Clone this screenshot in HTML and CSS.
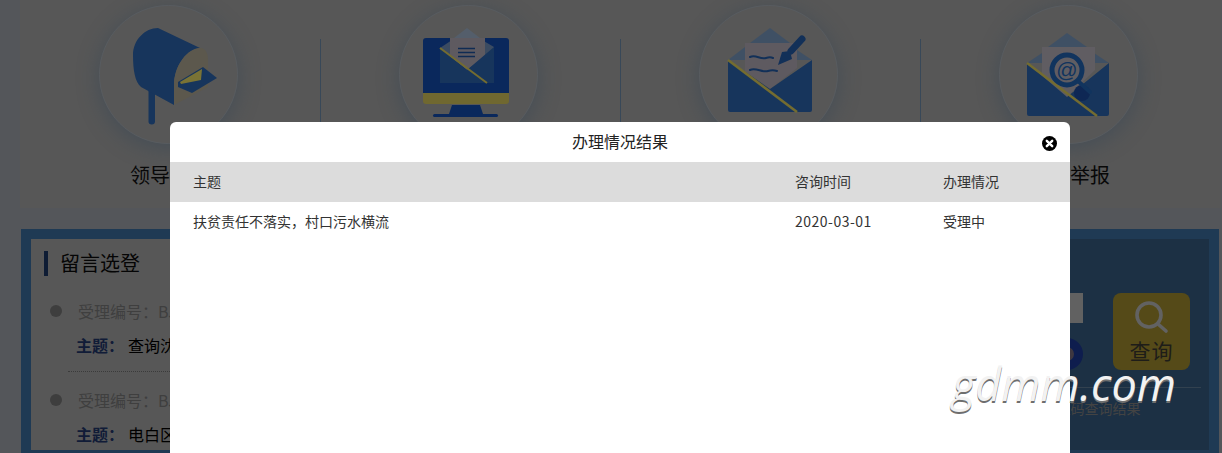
FILE: index.html
```html
<!DOCTYPE html>
<html lang="zh-CN">
<head>
<meta charset="utf-8">
<title>办理情况结果</title>
<link rel="stylesheet" href="styles.css">
</head>
<body>
<main class="page">
  <nav class="nav">
    <a class="nav-item">
      <span class="disc">
        <svg class="ico" width="139" height="139" viewBox="99 5 139 139">
          <rect x="148.5" y="88" width="6.5" height="36.5" rx="3.2" fill="#2e6ab8"/>
          <path d="M133 55C133 40 145 28 158 28L200 48C185 50 174 68 174 85L174 105L141 87C135 82 133 70 133 55Z" fill="#2e6ab8"/>
          <path d="M174 105L174 85C174 65 188 48 200 48C206 48 208 54 208 60L208 87Z" fill="#b8b09a"/>
          <path d="M178 82L203 67L217 78L192 93L178 87Z" fill="#2e6ab8"/>
          <path d="M180 82L202 69L201 80L181 84Z" fill="#f4e66a"/>
        </svg>
      </span>
      <span class="nav-label">领导信箱</span>
    </a>
    <i class="nav-rule"></i>
    <a class="nav-item">
      <span class="disc">
        <svg class="ico" width="139" height="139" viewBox="399 5 139 139">
          <path d="M452 105H480L483 114H449Z" fill="#1450b8"/>
          <rect x="433" y="114" width="65" height="3" rx="1.5" fill="#1450b8"/>
          <path d="M423 41a3 3 0 0 1 3-3h80a3 3 0 0 1 3 3v52h-86Z" fill="#1450b8"/>
          <path d="M423 93h86v8a3 3 0 0 1-3 3h-80a3 3 0 0 1-3-3Z" fill="#e0d060"/>
          <path d="M467 28L454 38H480Z" fill="#a8bdd6"/>
          <path d="M440 48L452 40H482L494 47V60H440Z" fill="#7796c2"/>
          <path d="M450 38H485V57L467 70L450 57Z" fill="#bdb4c0"/>
          <path d="M440 48L467 70L494 47V83H440Z" fill="#2e6ab8"/>
          <path d="M440 48L487 83" stroke="#e8d860" stroke-width="2" fill="none"/>
          <path d="M458 48.5H475M458 52.5H475M458 56.5H475" stroke="#1e56a6" stroke-width="1.5" fill="none"/>
        </svg>
      </span>
      <span class="nav-label">信访投诉</span>
    </a>
    <i class="nav-rule"></i>
    <a class="nav-item">
      <span class="disc">
        <svg class="ico" width="139" height="139" viewBox="699 5 139 139">
          <path d="M770 28L750 43H790Z" fill="#7fa0c8"/>
          <path d="M728 60L745 47V60ZM797 50L812 60H797Z" fill="#7fa0c8"/>
          <path d="M745 43H797V68L770 89L745 72Z" fill="#bdb4c0"/>
          <path d="M728 60L770 89L812 60V110a2 2 0 0 1-2 2H730a2 2 0 0 1-2-2Z" fill="#2e6ab8"/>
          <path d="M728 60L797 112" stroke="#e8d860" stroke-width="2.6" fill="none"/>
          <path d="M750 57C756 54 760 60 766 58C769 57 771 57 773 58M750 70C756 67 762 73 768 71C771 70 774 70 777 71" stroke="#2560b0" stroke-width="2" fill="none" stroke-linecap="round"/>
          <path d="M802 39L791 51" stroke="#2560b0" stroke-width="7" stroke-linecap="round"/>
          <path d="M778 65L782 52L790 51L792 59Z" fill="#2560b0"/>
        </svg>
      </span>
      <span class="nav-label">咨询投诉</span>
    </a>
    <i class="nav-rule"></i>
    <a class="nav-item">
      <span class="disc">
        <svg class="ico" width="139" height="139" viewBox="999 5 139 139">
          <path d="M1067 33L1048 47H1087Z" fill="#7fa0c8"/>
          <path d="M1027 63L1042 53V63ZM1094 53L1109 63H1094Z" fill="#7fa0c8"/>
          <path d="M1042 47H1095V70L1067 97L1042 75Z" fill="#c0bac4"/>
          <path d="M1027 63L1067 97L1109 63V114a2 2 0 0 1-2 2H1029a2 2 0 0 1-2-2Z" fill="#2e6ab8"/>
          <circle cx="1082" cy="93" r="8" fill="#1c4ea8"/>
          <path d="M1027 63L1097 116" stroke="#e8d860" stroke-width="2.4" fill="none"/>
          <circle cx="1067" cy="70" r="15" stroke="#2268bc" stroke-width="5" fill="none"/>
          <path d="M1078 81L1090 92" stroke="#2268bc" stroke-width="4" stroke-linecap="round"/>
          <text class="at" x="1067" y="77" text-anchor="middle">@</text>
        </svg>
      </span>
      <span class="nav-label">信访举报</span>
    </a>
  </nav>

  <section class="board">
    <div class="list">
      <h2 class="list-title">留言选登</h2>
      <article class="msg">
        <p class="msg-code"><i class="dot"></i>受理编号：BJ20200301008</p>
        <p class="msg-subject"><b>主题：</b>查询沈河区信访办理情况</p>
      </article>
      <article class="msg">
        <p class="msg-code"><i class="dot"></i>受理编号：BJ20200301007</p>
        <p class="msg-subject"><b>主题：</b>电白区村道路面破损严重</p>
      </article>
    </div>
    <aside class="query">
      <div class="query-form">
        <div class="fields">
          <div class="field"></div>
          <div class="captcha"></div>
        </div>
        <button class="query-btn" type="button">
          <svg width="36" height="36" viewBox="0 0 36 36"><circle cx="15" cy="15" r="12" stroke="#c4c4c4" stroke-width="3.6" fill="none"/><path d="M24 24L32 31" stroke="#c4c4c4" stroke-width="3.6" stroke-linecap="round"/></svg>
          <span>查询</span>
        </button>
      </div>
      <p class="query-note">请输入受理编号和验证码查询结果</p>
    </aside>
  </section>
</main>

<div class="mask"></div>

<div class="modal">
  <header class="modal-head">
    <h3 class="modal-title">办理情况结果</h3>
    <svg class="modal-close" width="15" height="15" viewBox="0 0 15 15"><circle cx="7.5" cy="7.5" r="7.5" fill="#000"/><path d="M4.8 4.8L10.2 10.2M10.2 4.8L4.8 10.2" stroke="#fff" stroke-width="2.4" stroke-linecap="round"/></svg>
  </header>
  <div class="row row-head">
    <span>主题</span><span>咨询时间</span><span>办理情况</span>
  </div>
  <div class="row">
    <span>扶贫责任不落实，村口污水横流</span><span class="date">2020-03-01</span><span>受理中</span>
  </div>
</div>

<div class="mark">gdmm.com</div>
</body>
</html>
```
FILE: styles.css
```css
* { box-sizing: border-box; }
html, body { margin: 0; height: 453px; overflow: hidden; }
body {
  background: #a8acb4;
  color: #000;
  font-family: "Noto Sans CJK SC", "Noto Sans", sans-serif;
}
.page { display: flex; flex-direction: column; width: 1222px; height: 453px; overflow: hidden; }

.nav {
  display: flex;
  flex: none;
  height: 208px;
  margin-left: 20px;
  padding: 5px 0 0 1px;
  width: 1201px;
  background: #aeaeae;
}
.nav-item { display: flex; flex-direction: column; align-items: center; width: 299px; }
.nav-rule { flex: none; width: 1px; height: 110px; margin-top: 34px; background: #7090b0; }
.disc {
  display: block;
  width: 139px;
  height: 139px;
  margin-right: 4px;
  border-radius: 50%;
  background: #aeaeae;
  border: 1px solid #b0b8c0;
  box-shadow: 0 4px 22px rgba(90, 130, 170, .45);
  overflow: hidden;
}
.ico { display: block; margin: -1px; }
.at { font: 21px "Liberation Sans", sans-serif; fill: #2268bc; }
.nav-label { margin-top: 17px; margin-right: 1px; font-size: 20px; line-height: 28px; color: #111; }

.board {
  display: flex;
  flex: none;
  width: 1198px;
  height: 231px;
  margin: 21px 0 0 21px;
  border: 10px solid #3e74a8;
}
.list { flex: none; width: 830px; height: 211px; padding: 12px 13px; background: #aeaeae; }
.list-title {
  margin: 0 0 23px;
  padding: 0 0 2px 12px;
  border-left: 4px solid #1c3868;
  font-size: 20px;
  font-weight: 400;
  line-height: 23px;
  color: #0a0a0a;
}
.msg + .msg { margin-top: 16px; }
.msg p { margin: 0; font-size: 16px; line-height: 24px; }
.msg-code { display: flex; align-items: center; padding-left: 6px; color: #7e7e7e; }
.dot { flex: none; width: 12px; height: 12px; margin-right: 16px; border-radius: 50%; background: #7c7c7c; }
.msg .msg-subject { margin: 10px 0 0 24px; padding: 0 0 14px 8px; color: #000; border-bottom: 1px dotted #777; }
.msg-subject b { color: #22386e; margin-right: 4px; }

.query { flex: 1; min-width: 0; height: 211px; padding: 54px 8px 0 9px; background: #386088; }
.query-form { display: flex; justify-content: flex-end; gap: 30px; padding: 0 11px 17px 0; border-bottom: 1px solid #64829e; }
.fields { display: flex; flex-direction: column; align-items: flex-end; gap: 15px; }
.field { width: 200px; height: 30px; background: #c2c2c2; }
.captcha { width: 32px; height: 32px; border: 9px solid #1c3a9c; border-radius: 50%; background: #7c6f80; }
.query-btn {
  display: flex;
  flex-direction: column;
  align-items: center;
  width: 77px;
  height: 77px;
  margin: 0;
  padding: 7px 0 0;
  border: 0;
  border-radius: 8px;
  background: #aa9430;
  color: #3c3a30;
  font: 21px/24px "Noto Sans CJK SC", sans-serif;
  letter-spacing: 1px;
}
.query-btn svg { display: block; margin-bottom: 2px; }
.query-note { margin: 10px 0 0; text-align: center; font-size: 14px; line-height: 20px; color: #868686; }

.mask { position: absolute; inset: 0; background: rgba(0, 0, 0, .5); }

.modal {
  position: absolute;
  left: 170px;
  top: 122px;
  width: 900px;
  height: 360px;
  border-radius: 6px;
  background: #fff;
  overflow: hidden;
}
.modal-head { position: relative; height: 40px; padding-bottom: 2px; display: flex; align-items: center; justify-content: center; }
.modal-title { margin: 0; font-size: 16px; font-weight: 400; color: #222; }
.modal-close { position: absolute; right: 13px; top: 14px; }
.row {
  display: grid;
  grid-template-columns: 602px 148px 1fr;
  align-items: center;
  height: 40px;
  padding: 0 0 2px 23px;
  font-size: 14px;
  color: #333;
}
.row-head { background: #dcdcdc; }
.date { letter-spacing: .5px; }

.mark {
  position: absolute;
  left: 952px;
  top: 354px;
  font: italic 400 45px/60px "Open Sans", sans-serif;
  color: #f2f2f2;
  text-shadow: 0 2px 0 #6e6e6e;
  white-space: nowrap;
}
```
